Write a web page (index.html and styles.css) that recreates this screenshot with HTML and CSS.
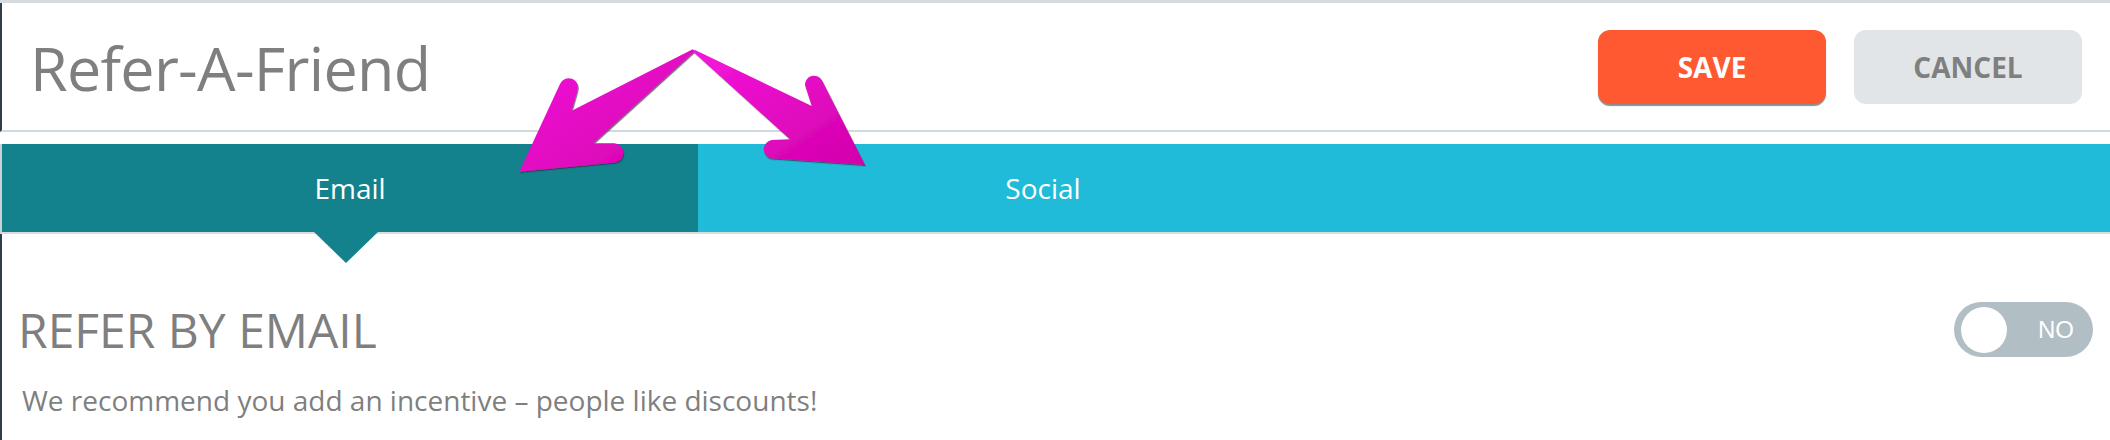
FILE: index.html
```html
<!DOCTYPE html>
<html lang="en">
<head>
    <meta charset="utf-8">
    <title>Refer-A-Friend</title>
    <link rel="stylesheet" href="styles.css">
</head>

<body>
    <div class="page">
        <div class="topline"></div>

        <header class="header">
            <h1 class="title">Refer-A-Friend</h1>
            <div class="actions">
                <button class="btn btn-save">SAVE</button>
                <button class="btn btn-cancel">CANCEL</button>
            </div>
        </header>

        <nav class="tabs">
            <div class="tab active">Email</div>
            <div class="tab">Social</div>
        </nav>

        <section class="content">
            <div class="row">
                <h2 class="heading">REFER BY EMAIL</h2>
                <div class="toggle">
                    <span class="knob"></span>
                    <span class="toggle-text">NO</span>
                </div>
            </div>
            <p class="hint">We recommend you add an incentive – people like discounts!</p>
        </section>

        <!-- annotation arrows drawn over the page -->
        <svg class="arrows" width="2110" height="440" viewBox="0 0 2110 440">
            <defs>
                <linearGradient id="pink" x1="0" y1="0" x2="1" y2="1">
                    <stop offset="0" stop-color="#f516dc"/>
                    <stop offset="1" stop-color="#d200aa"/>
                </linearGradient>
                <filter id="shade" x="-10%" y="-10%" width="120%" height="130%">
                    <feDropShadow dx="0.8" dy="1.2" stdDeviation="0.6" flood-color="#2a2a3a" flood-opacity="0.7"/>
                </filter>
            </defs>
            <path fill="url(#pink)" filter="url(#shade)"
                  d="M692.7 49.3 L571.7 110.7 L577.3 91 A9 9 0 0 0 560 84 L519.3 171.7 L613.3 162.7 A9.7 9.7 0 0 0 614 143.3 L593.3 143.3 L695 51 Z"/>
            <path fill="url(#pink)" filter="url(#shade)"
                  d="M695 50 L811.7 106 L805 85 A9 9 0 0 1 821.7 80 L865 165 L770 158.3 A9.5 9.5 0 0 1 771.7 140 L790 139.3 L693.3 51.7 Z"/>
        </svg>
    </div>
</body>
</html>
```

FILE: styles.css
```css
body {
    margin: 0;
    font-family: "Open Sans", Arial, sans-serif;
    color: #7f7f7f;
    background-color: #ffffff;
}

.page {
    position: relative;
    width: 2110px;
    height: 440px;
    overflow: hidden;
}

.topline {
    height: 3px;
    background-color: #d5dbdf;
}

.header {
    height: 127px;
    display: flex;
    align-items: center;
    justify-content: space-between;
    padding: 0 28px 0 28px;
    border-left: 2px solid #2f3e48;
    border-bottom: 2px solid #d0d9dd;
}

.title {
    margin: 2px 0 0 0;
    font-size: 61px;
    font-weight: 400;
    letter-spacing: -0.7px;
    line-height: 1;
    color: #7f7f7f;
}

.actions {
    display: flex;
    gap: 28px;
}

.btn {
    width: 228px;
    height: 74px;
    border: none;
    border-radius: 12px;
    font-family: "Open Sans", Arial, sans-serif;
    font-size: 28px;
    font-weight: 700;
    cursor: pointer;
}

.btn-save {
    background-color: #fe5931;
    color: #ffffff;
    box-shadow: 0 2px 1px rgba(0, 0, 0, 0.45);
}

.btn-cancel {
    background-color: #e1e5e8;
    color: #7f7f7f;
}

.tabs {
    display: flex;
    height: 88px;
    margin-top: 12px;
    background-color: #1fbbd8;
    border-bottom: 2px solid #dcdcdc;
    border-left: 2px solid #c9d3d6;
}

.tab {
    position: relative;
    width: 690px;
    display: flex;
    align-items: center;
    justify-content: center;
    font-size: 28px;
    color: #ffffff;
}

.tab:first-child {
    width: 696px;
}

.tab.active {
    background-color: #13828c;
}

.tab.active::after {
    content: "";
    position: absolute;
    left: 312px;
    top: 88px;
    border-left: 32px solid transparent;
    border-right: 32px solid transparent;
    border-top: 31px solid #13828c;
}

.content {
    border-left: 2px solid #2f3e48;
    padding: 68px 17px 0 20px;
    height: 206px;
}

.row {
    display: flex;
    align-items: center;
    justify-content: space-between;
}

.heading {
    margin: 0 0 0 -4px;
    font-size: 48px;
    font-weight: 400;
    line-height: 1;
    color: #7f7f7f;
}

.toggle {
    width: 139px;
    height: 55px;
    box-sizing: border-box;
    padding: 0 19px 0 7px;
    border-radius: 28px;
    background-color: #b1bec4;
    display: flex;
    align-items: center;
    justify-content: space-between;
}

.knob {
    width: 46px;
    height: 46px;
    border-radius: 50%;
    background-color: #ffffff;
}

.toggle-text {
    font-family: "Liberation Sans", Arial, sans-serif;
    font-size: 24px;
    color: #ffffff;
}

.hint {
    margin: 24px 0 0 0;
    font-size: 28px;
    line-height: 38px;
}

.arrows {
    position: absolute;
    left: 0;
    top: 0;
    pointer-events: none;
}
```
